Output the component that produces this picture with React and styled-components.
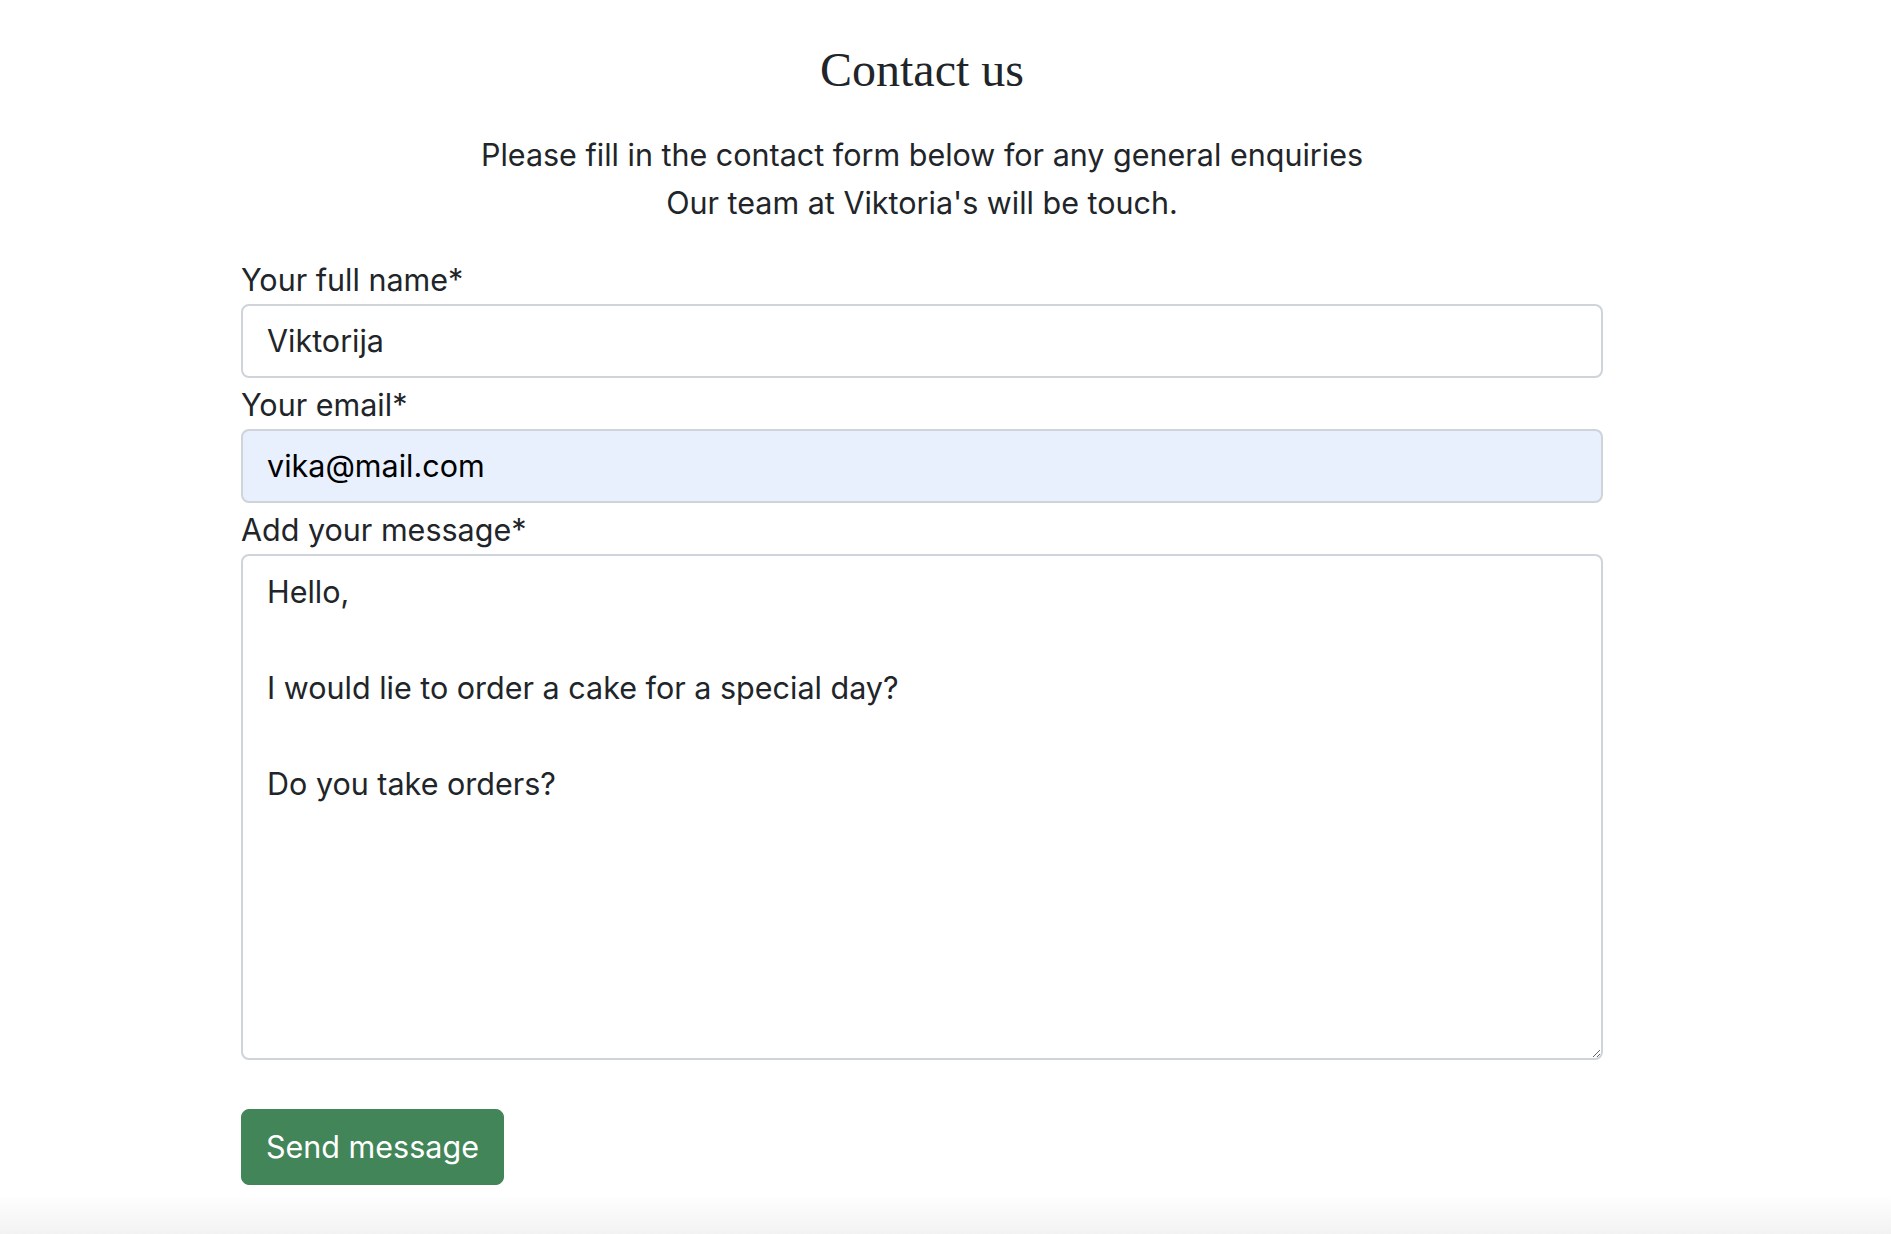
import React, { useState } from "react";
import styled, { createGlobalStyle } from "styled-components";

const GlobalStyle = createGlobalStyle`
  html, body {
    margin: 0;
    padding: 0;
    background: #ffffff;
  }

  body {
    font-family: Inter, "Noto Sans", "Liberation Sans", sans-serif;
    font-size: 30.5px;
    line-height: 48px;
    color: #212529;
  }

  * {
    box-sizing: border-box;
  }
`;

const Page = styled.div`
  display: flex;
  flex-direction: column;
  min-height: 100vh;
`;

const Container = styled.main`
  width: 1362px;
  margin-left: 241px;
  padding-top: 41px;
  flex: 1;
`;

const Title = styled.h1`
  margin: 0;
  font-family: "Liberation Serif", "Times New Roman", serif;
  font-weight: 400;
  font-size: 48px;
  line-height: 1.2;
  text-align: center;
  color: #212529;
`;

const Intro = styled.p`
  margin: 32px 0 0;
  text-align: center;
`;

const Form = styled.form`
  display: flex;
  flex-direction: column;
  margin-top: 27px;
`;

const Label = styled.label`
  display: block;
  line-height: 48px;
  margin-top: 2px;
`;

const Field = styled.div`
  display: flex;
  flex-direction: column;
  margin-bottom: 1px;
`;

const Input = styled.input`
  width: 100%;
  height: 74px;
  padding: 12px 24px;
  font: inherit;
  color: ${(p) => (p.$autofill ? "#000000" : "#212529")};
  background: ${(p) => (p.$autofill ? "#e8f0fe" : "#ffffff")};
  border: 2px solid #ced4da;
  border-radius: 8px;
  outline: none;
`;

const TextArea = styled.textarea`
  width: 100%;
  height: 506px;
  padding: 12px 24px;
  font: inherit;
  line-height: 48px;
  color: #212529;
  background: #ffffff;
  border: 2px solid #ced4da;
  border-radius: 8px;
  resize: vertical;
  outline: none;
`;

const SendButton = styled.button`
  align-self: flex-start;
  margin-top: 48px;
  height: 76px;
  padding: 0 24px;
  font: inherit;
  color: #ffffff;
  background: #428558;
  border: 1px solid #428558;
  border-radius: 8px;
  cursor: pointer;
`;

const Footer = styled.footer`
  height: 40px;
  margin-top: 10px;
  background: linear-gradient(to bottom, #ffffff, #f2f2f2);
`;

export default function App() {
  const [name, setName] = useState("Viktorija");
  const [email, setEmail] = useState("vika@mail.com");
  const [message, setMessage] = useState(
    "Hello,\n\nI would lie to order a cake for a special day?\n\nDo you take orders?"
  );

  return (
    <>
      <GlobalStyle />
      <Page>
        <Container>
          <Title>Contact us</Title>
          <Intro>
            Please fill in the contact form below for any general enquiries
            <br />
            Our team at Viktoria's will be touch.
          </Intro>
          <Form onSubmit={(e) => e.preventDefault()}>
            <Field>
              <Label htmlFor="name">Your full name*</Label>
              <Input
                id="name"
                value={name}
                onChange={(e) => setName(e.target.value)}
              />
            </Field>
            <Field>
              <Label htmlFor="email">Your email*</Label>
              <Input
                id="email"
                type="email"
                $autofill
                value={email}
                onChange={(e) => setEmail(e.target.value)}
              />
            </Field>
            <Field>
              <Label htmlFor="message">Add your message*</Label>
              <TextArea
                id="message"
                rows={10}
                value={message}
                onChange={(e) => setMessage(e.target.value)}
              />
            </Field>
            <SendButton type="submit">Send message</SendButton>
          </Form>
        </Container>
        <Footer />
      </Page>
    </>
  );
}
